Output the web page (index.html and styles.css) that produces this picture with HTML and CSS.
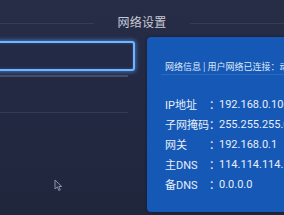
FILE: index.html
```html
<!DOCTYPE html>
<html lang="zh">
<head>
<meta charset="utf-8">
<link rel="stylesheet" href="styles.css">
</head>
<body>
<div class="screen">
  <header class="title-bar">
    <span class="title-line"></span>
    <h1 class="title">网络设置</h1>
    <span class="title-line"></span>
  </header>
  <main class="content">
    <section class="left">
      <div class="input-box"></div>
      <div class="divider divider-strong"></div>
      <div class="divider divider-soft"></div>
    </section>
    <section class="panel">
      <div class="panel-head">网络信息 | 用户网络已连接：动态IP</div>
      <div class="rows">
        <div class="row"><span class="label">IP地址</span><span class="colon">：</span><span class="value">192.168.0.106</span></div>
        <div class="row"><span class="label">子网掩码</span><span class="colon">：</span><span class="value">255.255.255.0</span></div>
        <div class="row"><span class="label">网关</span><span class="colon">：</span><span class="value">192.168.0.1</span></div>
        <div class="row"><span class="label">主DNS</span><span class="colon">：</span><span class="value">114.114.114.114</span></div>
        <div class="row"><span class="label">备DNS</span><span class="colon">：</span><span class="value">0.0.0.0</span></div>
      </div>
    </section>
  </main>
  <svg class="cursor" width="9" height="13" viewBox="0 0 9 13">
    <path d="M1 1 L1 10 L3.2 8 L4.8 11.5 L6.3 10.8 L4.8 7.5 L7.8 7.5 Z" fill="#2a3048" stroke="#8a8fa3" stroke-width="1"/>
  </svg>
</div>
</body>
</html>
```
FILE: styles.css
```css
html, body {
  margin: 0;
  padding: 0;
}
body {
  width: 284px;
  height: 215px;
  overflow: hidden;
  background: linear-gradient(180deg, #282d47 0%, #232942 45%, #20263c 100%);
  font-family: Roboto, "Noto Sans CJK SC", sans-serif;
}
.screen {
  position: relative;
  width: 284px;
  height: 215px;
  overflow: hidden;
}
.title-bar {
  height: 37px;
  display: flex;
  align-items: flex-start;
  padding-top: 13px;
  box-sizing: border-box;
  gap: 23px;
}
.title-line {
  flex: 1;
  height: 1px;
  margin-top: 10px;
  background: #363c56;
}
.title {
  margin: 0;
  font-family: "Noto Sans CJK SC", sans-serif;
  font-weight: 400;
  font-size: 12px;
  line-height: 18px;
  color: #c6c9d4;
  letter-spacing: 0.3px;
}
.content {
  display: flex;
  gap: 12px;
  margin-left: -8px;
}
.left {
  width: 143px;
  padding-top: 4px;
  flex: none;
}
.input-box {
  height: 26px;
  border: 2px solid #78b3f5;
  border-radius: 3px;
  box-shadow: 0 0 4px 1px rgba(60, 140, 235, 0.75), inset 0 0 3px rgba(60, 140, 235, 0.5);
  background: #232a45;
}
.divider {
  height: 1px;
  margin-right: 7px;
}
.divider-strong {
  margin-top: 4px;
  height: 2px;
  background: #474d64;
}
.divider-soft {
  margin-top: 35px;
  background: #353b52;
}
.panel {
  flex: none;
  width: 160px;
  height: 175px;
  background: #1558b6;
  border-radius: 4px;
  box-shadow: 0 0 3px rgba(10, 15, 30, 0.6);
  padding-left: 18px;
  box-sizing: border-box;
  color: #e8effa;
  white-space: nowrap;
  overflow: hidden;
}
.panel-head {
  font-family: "Noto Sans CJK SC", sans-serif;
  font-size: 9px;
  line-height: 12px;
  padding-top: 24px;
  padding-bottom: 1px;
  color: #dfe8f7;
  border-bottom: 1px solid #2a69c0;
  margin-left: -4px;
  padding-left: 4px;
}
.rows {
  padding-top: 19px;
  display: flex;
  flex-direction: column;
}
.row {
  display: flex;
  height: 20px;
  align-items: center;
  font-size: 11px;
}
.label {
  width: 44px;
  font-family: Roboto, "Noto Sans CJK SC", sans-serif;
}
.colon {
  width: 10px;
  font-family: "Noto Sans CJK SC", sans-serif;
}
.value {
  font-family: Roboto, sans-serif;
}
.cursor {
  position: absolute;
  left: 54px;
  top: 179px;
}
```
